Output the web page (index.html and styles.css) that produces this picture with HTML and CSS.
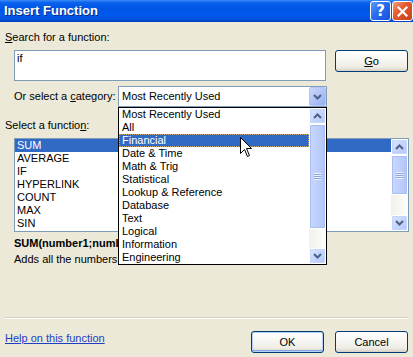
FILE: index.html
```html
<!DOCTYPE html>
<html>
<head>
<meta charset="utf-8">
<link rel="stylesheet" href="styles.css">
</head>
<body>
<div class="window">
  <div class="titlebar">
    <span class="title">Insert Function</span>
    <div class="tb-buttons">
      <span class="tb-btn help">?</span>
      <span class="tb-btn close">
        <svg width="11" height="11" viewBox="0 0 11 11"><path d="M1.5 1.5 L9.5 9.5 M9.5 1.5 L1.5 9.5" stroke="#fff" stroke-width="2.2" stroke-linecap="square"/></svg>
      </span>
    </div>
  </div>
  <div class="body">
    <div class="label search-label"><u>S</u>earch for a function:</div>
    <div class="search-row">
      <div class="search-box">if</div>
      <div class="btn go"><u>G</u>o</div>
    </div>
    <div class="cat-row">
      <span class="cat-label">Or select a <u>c</u>ategory:</span>
      <div class="combo">
        <span class="combo-text">Most Recently Used</span>
        <span class="combo-btn">
          <svg width="9" height="6" viewBox="0 0 9 6"><path d="M1 1 L4.5 4.5 L8 1" fill="none" stroke="#4D6185" stroke-width="2"/></svg>
        </span>
        <div class="dropdown">
          <ul class="dd-items">
            <li>Most Recently Used</li>
            <li>All</li>
            <li class="sel focus">Financial</li>
            <li>Date &amp; Time</li>
            <li>Math &amp; Trig</li>
            <li>Statistical</li>
            <li>Lookup &amp; Reference</li>
            <li>Database</li>
            <li>Text</li>
            <li>Logical</li>
            <li>Information</li>
            <li>Engineering</li>
          </ul>
          <div class="scrollbar">
            <span class="sb-btn"><svg width="9" height="6" viewBox="0 0 9 6"><path d="M1 5 L4.5 1.5 L8 5" fill="none" stroke="#4D6185" stroke-width="2"/></svg></span>
            <span class="sb-thumb tall"><span class="grip"></span></span>
            <span class="sb-track"></span>
            <span class="sb-btn"><svg width="9" height="6" viewBox="0 0 9 6"><path d="M1 1 L4.5 4.5 L8 1" fill="none" stroke="#4D6185" stroke-width="2"/></svg></span>
          </div>
        </div>
      </div>
    </div>
    <div class="label fn-label">Select a functio<u>n</u>:</div>
    <div class="listbox">
      <ul class="fn-items">
        <li class="sel">SUM</li>
        <li>AVERAGE</li>
        <li>IF</li>
        <li>HYPERLINK</li>
        <li>COUNT</li>
        <li>MAX</li>
        <li>SIN</li>
      </ul>
      <div class="scrollbar">
        <span class="sb-btn"><svg width="9" height="6" viewBox="0 0 9 6"><path d="M1 5 L4.5 1.5 L8 5" fill="none" stroke="#4D6185" stroke-width="2"/></svg></span>
        <span class="sb-thumb short"><span class="grip"></span></span>
        <span class="sb-track"></span>
        <span class="sb-btn"><svg width="9" height="6" viewBox="0 0 9 6"><path d="M1 1 L4.5 4.5 L8 1" fill="none" stroke="#4D6185" stroke-width="2"/></svg></span>
      </div>
    </div>
    <div class="sig">SUM(number1;number2;...)</div>
    <div class="desc">Adds all the numbers in a range of cells.</div>
  </div>
  <div class="sep"></div>
  <div class="footer">
    <a class="help-link">Help on this function</a>
    <div class="buttons">
      <div class="btn ok">OK</div>
      <div class="btn">Cancel</div>
    </div>
  </div>
  <svg class="cursor" width="13" height="21" viewBox="0 0 13 21"><path d="M0.5 0.5 L0.5 16.5 L4.5 12.5 L7.5 19.5 L9.5 18.5 L6.5 11.5 L11.5 11.5 Z" fill="#fff" stroke="#000" stroke-width="1"/></svg>
</div>
</body>
</html>
```

FILE: styles.css
```css
* { box-sizing: border-box; }
html, body {
  margin: 0;
  padding: 0;
}
body {
  width: 413px;
  height: 357px;
  overflow: hidden;
  background: #ECE9D8;
  font-family: "Liberation Sans", Arial, sans-serif;
  font-size: 11px;
  line-height: 13px;
  color: #000;
}
ul { list-style: none; margin: 0; padding: 0; }
u { text-decoration: underline; }

.window {
  position: relative;
  width: 413px;
  height: 357px;
  display: flex;
  flex-direction: column;
}

.titlebar {
  height: 22px;
  flex: none;
  display: flex;
  align-items: center;
  justify-content: space-between;
  padding-left: 4px;
  background: linear-gradient(#3C8CF8 0%, #0A62EE 12%, #0055E5 35%, #0058EC 70%, #0250DA 90%, #0041C0 100%);
}
.title {
  color: #fff;
  font-weight: bold;
  font-size: 13px;
  line-height: 22px;
  text-shadow: 1px 1px 0 #0C2A86;
}
.tb-buttons {
  display: flex;
  gap: 1px;
  align-self: flex-start;
  padding-top: 1px;
}
.tb-btn {
  width: 21px;
  height: 20px;
  border: 1px solid #fff;
  border-radius: 3px;
  display: flex;
  align-items: center;
  justify-content: center;
  color: #fff;
}
.help {
  background: linear-gradient(135deg, #5A9BFF 0%, #2A6CF0 45%, #1450DA 100%);
  font-family: "DejaVu Sans", sans-serif;
  font-weight: bold;
  font-size: 15px;
}
.close {
  background: linear-gradient(135deg, #F3A080 0%, #E45A30 40%, #C8401A 100%);
}

.body {
  flex: 1;
  padding: 0 5px;
}
.label { height: 13px; }
.search-label { margin-top: 9px; }

.search-row {
  display: flex;
  align-items: flex-start;
  gap: 9px;
  margin-top: 6px;
  margin-left: 9px;
}
.search-box {
  width: 313px;
  height: 31px;
  background: #fff;
  border: 1px solid #7F9DB9;
  padding: 1px 2px;
}

.btn {
  width: 73px;
  height: 22px;
  border: 1px solid #003C74;
  border-radius: 3px;
  background: linear-gradient(#FFFFFF 0%, #F7F7F4 40%, #EEEDE5 80%, #D6D0C5 100%);
  display: flex;
  align-items: center;
  justify-content: center;
}
.btn.ok {
  box-shadow: inset 0 0 0 1px #B6D0F5, inset 0 -1px 0 1px #7FA5E3;
}

.cat-row {
  display: flex;
  align-items: center;
  justify-content: space-between;
  width: 313px;
  margin-left: 9px;
  margin-top: 5px;
  height: 21px;
}
.combo {
  position: relative;
  width: 209px;
  height: 21px;
  background: #fff;
  border: 1px solid #7F9DB9;
  display: flex;
  align-items: center;
  justify-content: space-between;
  padding-left: 3px;
}
.combo-btn {
  width: 17px;
  height: 19px;
  border-radius: 2px;
  background: linear-gradient(135deg, #C9D7FC 0%, #AEC2F6 55%, #98B0F0 100%);
  border: 1px solid #B3C6F6;
  display: flex;
  align-items: center;
  justify-content: center;
}

.dropdown {
  position: absolute;
  left: -1px;
  top: 20px;
  width: 209px;
  height: 158px;
  background: #fff;
  border: 1px solid #000;
  display: flex;
  z-index: 5;
}
.dd-items {
  flex: 1;
}
.dd-items li {
  height: 13px;
  line-height: 13px;
  padding-left: 3px;
  white-space: nowrap;
}
.sel {
  background: #316AC5;
  color: #fff;
}
.dd-items li.focus {
  outline: 1px dotted #C9A66A;
  outline-offset: -1px;
}

.scrollbar {
  width: 17px;
  flex: none;
  display: flex;
  flex-direction: column;
  background: linear-gradient(90deg, #F3F1EA 0%, #FDFDFA 100%);
}
.sb-btn {
  height: 16px;
  flex: none;
  border: 1px solid #fff;
  border-radius: 2px;
  background: linear-gradient(135deg, #DCE5FD 0%, #C3D3FC 55%, #B3C6F8 100%);
  box-shadow: inset 0 0 0 1px #C6D5FA;
  display: flex;
  align-items: center;
  justify-content: center;
}
.sb-thumb {
  flex: none;
  border: 1px solid #fff;
  border-radius: 2px;
  background: linear-gradient(90deg, #C9D7FD 0%, #BCCDFB 60%, #B0C4F8 100%);
  box-shadow: inset 0 0 0 1px #A8BDF3;
  display: flex;
  align-items: center;
  justify-content: center;
}
.sb-thumb.tall { height: 105px; }
.sb-thumb.short { height: 40px; }
.sb-track { flex: 1; }
.grip {
  width: 7px;
  height: 7px;
  background: repeating-linear-gradient(#EEF3FF 0 1px, #8FA5DA 1px 2px);
}

.fn-label { margin-top: 12px; }
.listbox {
  display: flex;
  margin-left: 9px;
  margin-top: 6px;
  width: 395px;
  height: 94px;
  background: #fff;
  border: 1px solid #7F9DB9;
}
.fn-items { flex: 1; }
.fn-items li {
  height: 13px;
  line-height: 13px;
  padding-left: 2px;
}

.sig {
  margin-left: 9px;
  margin-top: 5px;
  font-weight: bold;
}
.desc {
  margin-left: 9px;
  margin-top: 3px;
}

.sep {
  height: 2px;
  flex: none;
  margin: 0 5px;
  border-top: 1px solid #D2CFC0;
  border-bottom: 1px solid #FFFFFF;
}
.footer {
  height: 38px;
  flex: none;
  display: flex;
  justify-content: space-between;
  align-items: flex-start;
  padding: 12px 5px 0 5px;
}
.help-link {
  color: #1C3FC4;
  text-decoration: underline;
  margin-top: 1px;
}
.buttons {
  display: flex;
  gap: 11px;
}

.cursor {
  position: absolute;
  left: 240px;
  top: 137px;
  z-index: 10;
}
```
